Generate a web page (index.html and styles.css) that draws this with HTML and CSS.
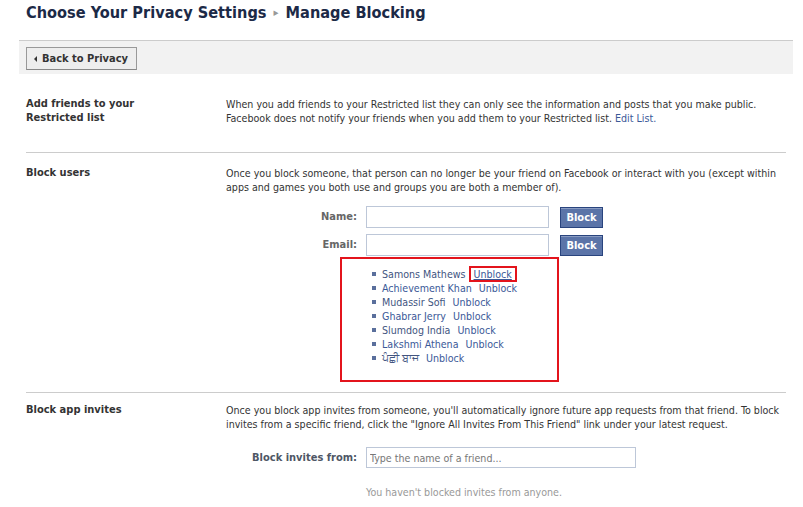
FILE: index.html
```html
<!DOCTYPE html>
<html>
<head>
<meta charset="utf-8">
<link rel="stylesheet" href="styles.css">
</head>
<body>
<h1 class="title">Choose Your Privacy Settings <span class="crumb-arrow">&#9656;</span> Manage Blocking</h1>
<div class="page">
  <div class="toolbar">
    <button class="back-btn"><span class="back-arrow"></span>Back to Privacy</button>
  </div>
  <div class="sections">
    <div class="section sec-restricted">
      <div class="label">Add friends to your Restricted list</div>
      <div class="body">
        <p class="desc">When you add friends to your Restricted list they can only see the information and posts that you make public. Facebook does not notify your friends when you add them to your Restricted list. <a class="link" href="#">Edit List.</a></p>
      </div>
    </div>
    <div class="section sec-block">
      <div class="label">Block users</div>
      <div class="body">
        <p class="desc">Once you block someone, that person can no longer be your friend on Facebook or interact with you (except within apps and games you both use and groups you are both a member of).</p>
        <div class="form">
          <div class="form-row">
            <label class="form-label">Name:</label>
            <input class="text-input short" type="text">
            <button class="block-btn">Block</button>
          </div>
          <div class="form-row">
            <label class="form-label">Email:</label>
            <input class="text-input short" type="text">
            <button class="block-btn">Block</button>
          </div>
        </div>
        <div class="blocked-box">
          <ul class="blocked-list">
            <li><span class="name">Samons Mathews</span><a class="unblock highlighted" href="#">Unblock</a></li>
            <li><a class="name" href="#">Achievement Khan</a><a class="unblock" href="#">Unblock</a></li>
            <li><span class="name">Mudassir Sofi</span><a class="unblock" href="#">Unblock</a></li>
            <li><a class="name" href="#">Ghabrar Jerry</a><a class="unblock" href="#">Unblock</a></li>
            <li><span class="name">Slumdog India</span><a class="unblock" href="#">Unblock</a></li>
            <li><a class="name" href="#">Lakshmi Athena</a><a class="unblock" href="#">Unblock</a></li>
            <li><span class="name">ਪੰਛੀ ਬਾਜ</span><a class="unblock" href="#">Unblock</a></li>
          </ul>
        </div>
      </div>
    </div>
    <div class="section sec-apps">
      <div class="label">Block app invites</div>
      <div class="body">
        <p class="desc">Once you block app invites from someone, you'll automatically ignore future app requests from that friend. To block invites from a specific friend, click the "Ignore All Invites From This Friend" link under your latest request.</p>
        <div class="form form-apps">
          <div class="form-row">
            <label class="form-label dark">Block invites from:</label>
            <input class="text-input long" type="text" placeholder="Type the name of a friend...">
          </div>
        </div>
        <p class="empty-note">You haven't blocked invites from anyone.</p>
      </div>
    </div>
  </div>
</div>
</body>
</html>
```

FILE: styles.css
```css
html, body {
  margin: 0;
  padding: 0;
  background: #fff;
}
body {
  font-family: "DejaVu Sans Condensed", "DejaVu Sans", sans-serif;
  font-stretch: condensed;
  font-size: 10.6px;
  line-height: 14px;
  color: #333;
}
.title {
  margin: 0;
  height: 40px;
  box-sizing: border-box;
  padding: 3px 0 0 26px;
  font-size: 16.2px;
  line-height: 20px;
  font-weight: bold;
  color: #1c2a47;
}
.crumb-arrow {
  color: #999;
  font-size: 11px;
  font-weight: normal;
  vertical-align: 2px;
  margin: 0 2px;
}
.page {
  margin-left: 19px;
  width: 774px;
}
.toolbar {
  border-top: 1px solid #ccc;
  background: #f2f2f2;
  height: 34px;
  box-sizing: border-box;
  padding: 6px 7px 0;
}
.back-btn {
  display: flex;
  align-items: center;
  white-space: nowrap;
  width: 111px;
  height: 23px;
  box-sizing: border-box;
  padding: 0 0 0 7px;
  border: 1px solid #999;
  border-bottom-color: #888;
  background: #eee;
  font-family: inherit;
  font-stretch: condensed;
  font-size: 11px;
  font-weight: bold;
  color: #333;
}
.back-arrow {
  width: 0;
  height: 0;
  border-top: 3px solid transparent;
  border-bottom: 3px solid transparent;
  border-right: 3px solid #333;
  margin-right: 5px;
}
.sections {
  padding: 0 7px;
  width: 760px;
}
.section {
  display: flex;
  border-bottom: 1px solid #ccc;
}
.section:last-child {
  border-bottom: none;
}
.label {
  width: 200px;
  flex-shrink: 0;
  font-size: 11px;
  font-weight: bold;
  color: #333;
  padding-right: 40px;
  box-sizing: border-box;
}
.body {
  flex: 1;
}
.desc {
  margin: 0;
}
.link, a {
  color: #3b5998;
  text-decoration: none;
}
.sec-restricted {
  padding: 23px 0 27px;
}
.sec-block {
  padding: 13px 0 10px;
}
.sec-apps {
  padding: 10px 0 0;
}
.form {
  margin-top: 12px;
  display: flex;
  flex-direction: column;
  gap: 6px;
}
.form-apps {
  margin-top: 16px;
}
.form-row {
  display: flex;
  align-items: center;
}
.form-label {
  width: 131px;
  margin-right: 9px;
  text-align: right;
  font-size: 11px;
  font-weight: bold;
  color: #666;
}
.form-label.dark {
  color: #4e5665;
}
.text-input {
  height: 22px;
  box-sizing: border-box;
  border: 1px solid #bdc7d8;
  padding: 2px 3px;
  font-family: inherit;
  font-stretch: condensed;
  font-size: 10.6px;
  color: #333;
  margin: 0;
}
.text-input.short {
  width: 183px;
}
.text-input.long {
  width: 270px;
  height: 21px;
}
.text-input::placeholder {
  color: #777;
}
.block-btn {
  margin-left: 11px;
  width: 43px;
  height: 21px;
  box-sizing: border-box;
  padding: 0;
  background: #5b74a8;
  border: 1px solid #29447e;
  box-shadow: inset 0 1px 0 #8a9cc2;
  color: #fff;
  font-family: inherit;
  font-stretch: condensed;
  font-size: 11px;
  font-weight: bold;
}
.blocked-box {
  margin: 1px 0 0 114px;
  width: 219px;
  height: 125px;
  box-sizing: border-box;
  border: 2px solid #e3141c;
  padding: 8px 0 0 30px;
}
.blocked-list {
  list-style: none;
  margin: 0;
  padding: 0;
}
.blocked-list li {
  display: flex;
  align-items: center;
  height: 14px;
  color: #3b5998;
}
.blocked-list li::before {
  content: "";
  width: 4px;
  height: 4px;
  background: #5a6f9c;
  margin-right: 6px;
  flex-shrink: 0;
}
.name {
  color: #3b5998;
}
span.name {
  color: #42557f;
}
.unblock {
  margin-left: 7px;
}
.unblock.highlighted {
  margin-left: 3px;
  border: 2px solid #e3141c;
  padding: 0 3px;
  line-height: 12px;
  text-decoration: underline;
}
.empty-note {
  margin: 17px 0 0 140px;
  color: #999;
}
```
